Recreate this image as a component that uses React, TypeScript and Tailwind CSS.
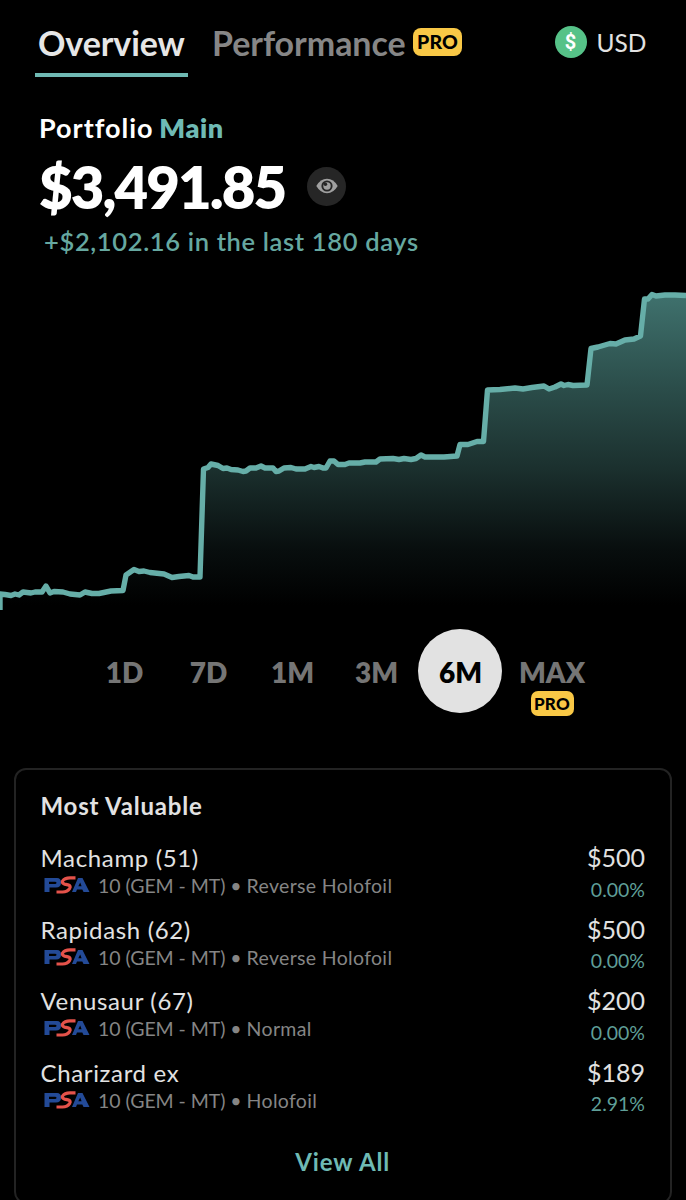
import clsx from "clsx";

type Holding = {
    name: string;
    finish: string;
    price: string;
    change: string;
};

const holdings: Holding[] = [
    { name: "Machamp (51)", finish: "Reverse Holofoil", price: "$500", change: "0.00%" },
    { name: "Rapidash (62)", finish: "Reverse Holofoil", price: "$500", change: "0.00%" },
    { name: "Venusaur (67)", finish: "Normal", price: "$200", change: "0.00%" },
    { name: "Charizard ex", finish: "Holofoil", price: "$189", change: "2.91%" },
];

const ranges = ["1D", "7D", "1M", "3M", "6M"];

// chart points, relative to a 686x330 box
const line =
    "0,314 5,314.5 11,315.5 15,314 19,315 23,312 31,313 35,312 42,312 46,306 50,313 54,311.5 63,312 70,314 80,315 85,312 92,313.5 99,313.5 111,311 123,310.5 126,295 134,289.5 139,291.5 144,291 150,292.5 164,294 172,297.5 179,296.5 189,295.5 193,297 200,297 203.5,189 208,187.5 211,184 218,185.5 223,188.5 227,188 231,189.5 238,190 243,191.5 246,191 250,188 256,188 261,186 265,188 273,188 276,191.5 279,191 284,188 291,187.5 296,189 305,189 311,186.5 314,187.5 319,186.5 323,188 326,188 330,181 334,181 338,184.5 345,184.5 349,183 360,183 365,182 376,182 380,179 393,178.5 399,179.5 404,178.5 411,179.5 416,178.5 421,175 425,177 444,177 457,176 460,164.5 468,164.5 477,161.5 483.5,161.5 487.5,110 500,109.5 515,108 523,109 532,107.5 544,106 549,109 555,107 561,104 564,105.5 568,104.5 573,105.5 587,105 591,68.5 598,67 610,63.5 616,64 625,60 634,59 640.5,56 644.5,19 648,19 652,14.5 656,16 665,15 675,15 686,15.5";

const ProBadge = ({ small = false }: { small?: boolean }) => (
    <span
        className={clsx(
            "flex items-center justify-center bg-[#f9c846] font-black text-black",
            small
                ? "h-[25px] w-[43px] rounded-[7px] text-[17px] tracking-[0.3px]"
                : "h-7 w-[49px] rounded-lg text-[19.5px] tracking-[0.2px]"
        )}
    >
        PRO
    </span>
);

const PsaLogo = () => (
    <svg viewBox="0 0 46 18" className="mr-2 ml-[3.5px] h-[18px] w-[46px] -translate-y-px">
        <path
            fill="#234a97"
            fillRule="evenodd"
            d="M0.5 2H13Q17 2 17 6.5Q17 11.5 12 11.5H5.5V16H0.5ZM5 5.8V8H11Q12.5 8 12.5 6.8Q12.5 5.8 11 5.8Z"
        />
        <path
            fill="#234a97"
            fillRule="evenodd"
            d="M28 16L34 2H38.5L45.5 16H39.5L38.3 13.5H33L32 16ZM34.3 10.3H37.6L36.2 6.5Z"
        />
        <path
            fill="none"
            stroke="#e4524a"
            strokeWidth="3.2"
            d="M31.5 1.9H26Q20.5 2 18.6 5Q17.6 7.2 20.6 8.1L24 8.9Q27.2 9.8 25.7 12.3Q23.4 15.9 18.5 16H12.5"
        />
    </svg>
);

const EyeButton = () => (
    <button className="flex size-[39px] items-center justify-center rounded-full bg-[#262626]">
        <svg viewBox="0 0 22 16" className="h-4 w-[22px]">
            <path fill="#a0a0a0" d="M0.3 8Q4.5 0.8 11 0.8T21.7 8Q17.5 15.2 11 15.2T0.3 8Z" />
            <circle cx="11" cy="8" r="5.6" fill="#262626" />
            <circle cx="11" cy="8" r="3.7" fill="#a0a0a0" />
            <circle cx="9.4" cy="6.3" r="1.8" fill="#262626" />
        </svg>
    </button>
);

const PortfolioChart = () => (
    <svg viewBox="0 0 686 330" className="block h-[330px] w-full">
        <defs>
            <linearGradient id="area" x1="0" y1="15" x2="0" y2="325" gradientUnits="userSpaceOnUse">
                <stop offset="0" stopColor="#3f716d" />
                <stop offset="0.3" stopColor="#2b4d4a" />
                <stop offset="0.56" stopColor="#1b302e" />
                <stop offset="0.82" stopColor="#080e0e" />
                <stop offset="1" stopColor="#000000" />
            </linearGradient>
        </defs>
        <polygon points={`0,330 ${line} 686,330`} fill="url(#area)" />
        <polyline
            points={`0,330 ${line}`}
            fill="none"
            stroke="#66aea8"
            strokeWidth="5.4"
            strokeLinejoin="round"
        />
    </svg>
);

const HoldingRow = ({ holding }: { holding: Holding }) => (
    <div className="flex h-[71.5px] justify-between">
        <div>
            <div className="text-[24px] leading-[31px] tracking-[0.65px] text-[#e2e2e2]">{holding.name}</div>
            <div className="mt-px flex h-6 items-center text-[19.5px] leading-6 whitespace-pre text-[#858585]">
                <PsaLogo />
                <span className="-tracking-[0.05px]">10 (GEM - MT) • </span>
                <span className="tracking-[0.33px]">{holding.finish}</span>
            </div>
        </div>
        <div className="text-right">
            <div className="text-[25px] leading-[31px] text-[#e2e2e2]">{holding.price}</div>
            <div className="mt-[4.5px] text-[19.5px] leading-6 text-[#5f9f98]">{holding.change}</div>
        </div>
    </div>
);

export default function App() {
    return (
        <div className="h-[1200px] w-[686px] overflow-hidden bg-black font-['Lato',sans-serif] text-white">
            <header className="flex h-[77px] items-start pt-[22px] pl-[35px]">
                <div className="h-[55px] w-[153px] border-b-4 border-[#6fb9b3] pl-[3px] text-[34px] leading-[42px] font-bold -tracking-[0.1px] whitespace-nowrap text-[#e6e6e6]">
                    Overview
                </div>
                <div className="ml-6 w-[201px] text-[34px] leading-[42px] font-bold -tracking-[0.05px] whitespace-nowrap text-[#868686]">
                    Performance
                </div>
                <div className="mt-1.5">
                    <ProBadge />
                </div>
                <div className="ml-[92.5px] flex h-10 items-center">
                    <span className="flex size-8 items-center justify-center rounded-full bg-[#56c288] font-['Roboto',sans-serif] text-[20px] font-bold">
                        $
                    </span>
                    <span className="ml-2.5 pt-0.5 text-[24.5px] leading-[42px] text-[#e2e2e2]">USD</span>
                </div>
            </header>

            <section className="h-[203px] pt-[35px] pl-[39px]">
                <div className="text-[27px] leading-8 font-bold tracking-[1px] whitespace-nowrap">
                    Portfolio <span className="-ml-[2px] font-extrabold tracking-[0.6px] text-[#6fbab4]">Main</span>
                </div>
                <div className="mt-[7px] flex h-[70px] items-center">
                    <span className="w-[268px] pt-0.5 text-[58px] leading-[72px] font-extrabold -tracking-[1.9px]">
                        $3,491.85
                    </span>
                    <EyeButton />
                </div>
                <div className="mt-[4px] ml-[5px] text-[25.5px] leading-8 font-semibold tracking-[0.65px] text-[#66a8a0]">
                    +$2,102.16 in the last 180 days
                </div>
            </section>

            <PortfolioChart />

            <nav className="flex h-[158px] pt-[19px] pl-[82px] text-[28px] font-extrabold text-[#757575]">
                {ranges.map((range) => (
                    <button
                        key={range}
                        className={clsx(
                            "flex size-[84px] items-center justify-center rounded-full pt-0.5 pl-px",
                            range === "6M" && "bg-[#e2e2e2] text-black"
                        )}
                    >
                        {range}
                    </button>
                ))}
                <button className="flex h-[86px] w-[100px] flex-col items-center">
                    <span className="mt-[25px] leading-[37px]">MAX</span>
                    <ProBadge small />
                </button>
            </nav>

            <section className="mx-[14px] h-[436px] rounded-xl border-2 border-[#232323] pr-[25px] pl-[24.5px] pt-5">
                <h2 className="mb-5 text-[24px] leading-8 font-bold tracking-[0.8px] text-[#e2e2e2]">
                    Most Valuable
                </h2>
                {holdings.map((holding) => (
                    <HoldingRow key={holding.name} holding={holding} />
                ))}
                <button className="mt-[18px] block w-full text-center text-[24px] leading-8 font-bold tracking-[0.9px] text-[#6fbab4]">
                    View All
                </button>
            </section>
        </div>
    );
}
